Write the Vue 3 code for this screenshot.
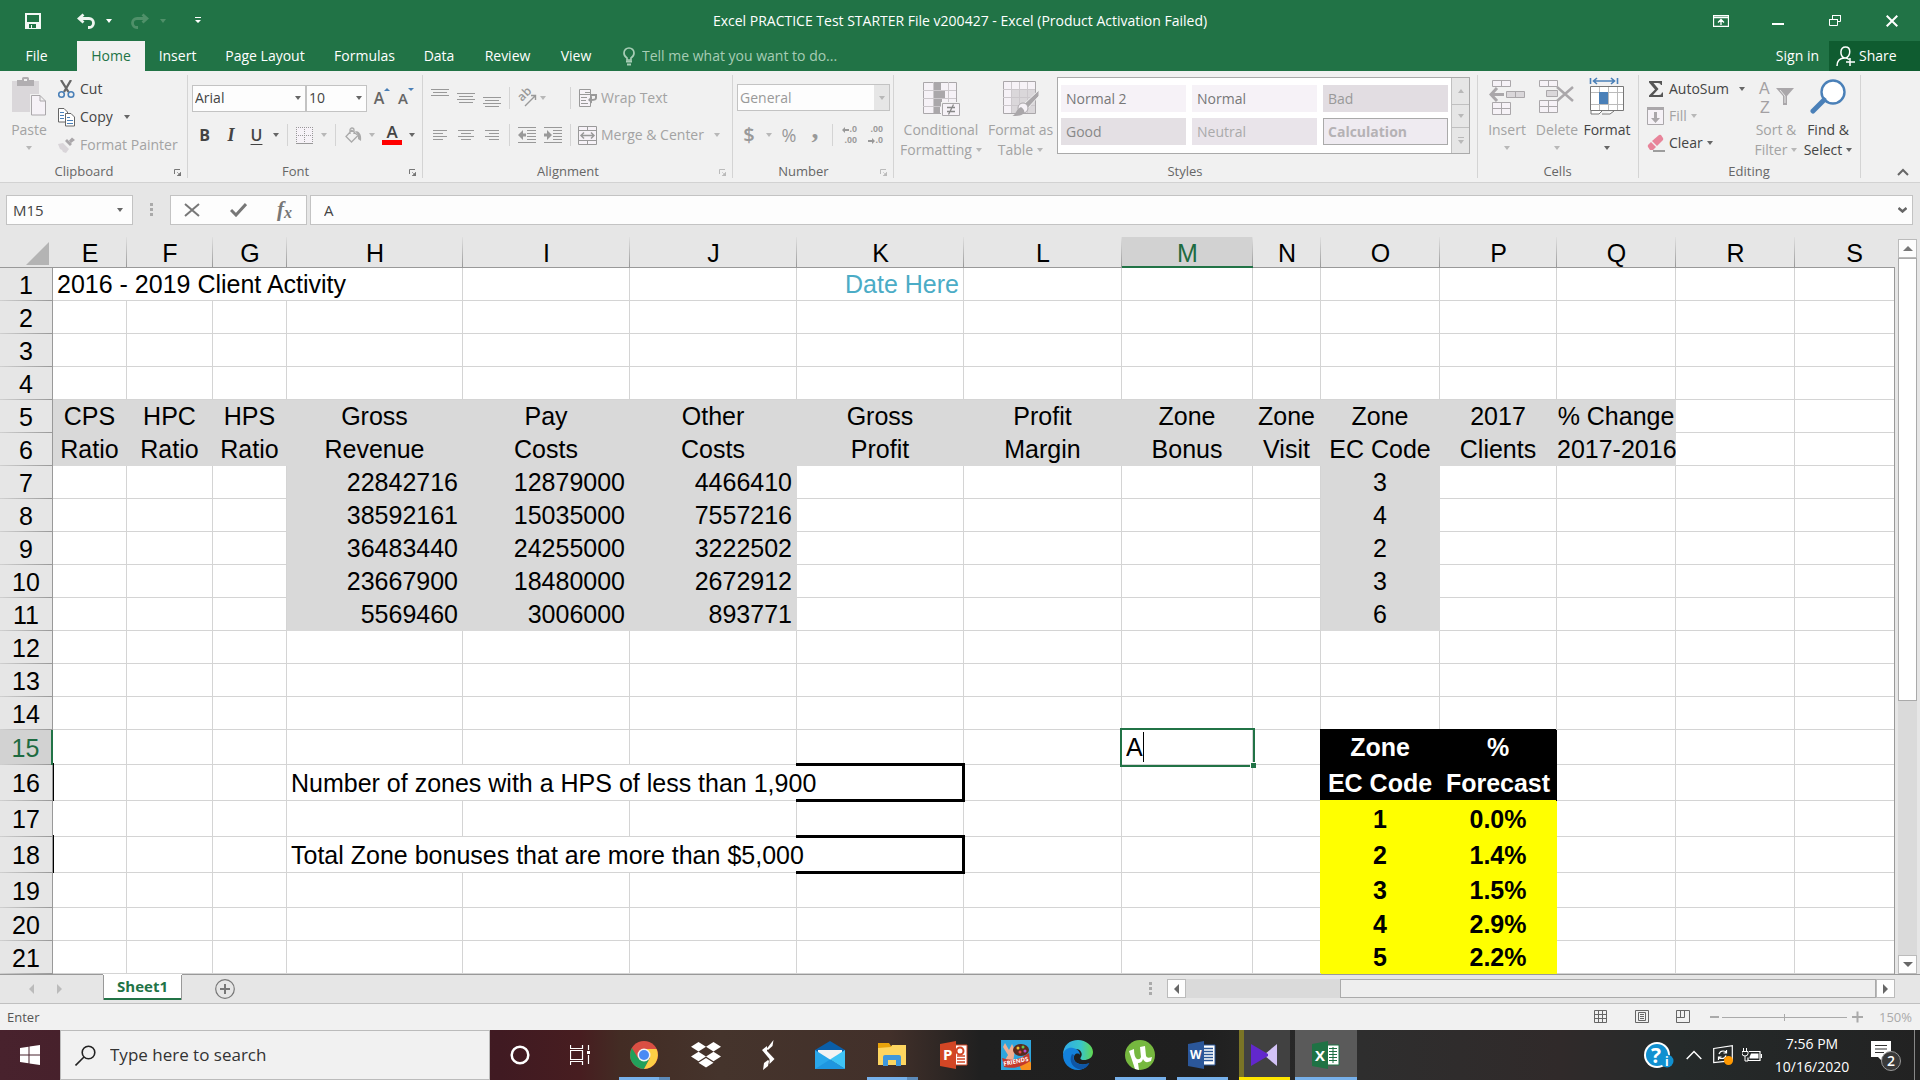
<template>
  <div class="window">
    <!-- title bar -->
    <header class="title-bar">
      <div class="quick-access">
        <button class="qa save" aria-label="Save">
          <svg width="16" height="16" viewBox="0 0 16 16"><path d="M0 0h16v16H0z M2 2v7h12V2z M4 11v4h2v-3h1v3h4v-4z" fill="#f4f8f5" fill-rule="evenodd" /></svg>
        </button>
        <button class="qa undo" aria-label="Undo">
          <svg width="18" height="16" viewBox="0 0 18 16"><path d="M6.500 1.500L2 5.500L6.500 9.500M2.500 5.500H12a4.500 4.500 0 0 1 0 9h-1" fill="none" stroke="#eef5f0" stroke-width="2.800" /></svg>
        </button>
        <button class="qa" aria-label="Undo history"><i class="caret light" /></button>
        <button class="qa redo" aria-label="Redo" disabled>
          <svg width="18" height="16" viewBox="0 0 18 16"><path d="M11.500 1.500L16 5.500L11.500 9.500M15.500 5.500H6a4.500 4.500 0 0 0 0 9h1" fill="none" stroke="#4f9069" stroke-width="2.800" /></svg>
        </button>
        <button class="qa" aria-label="Redo history" disabled><i class="caret dim" /></button>
        <button class="qa customize" aria-label="Customize Quick Access Toolbar">
          <svg width="6" height="7" viewBox="0 0 6 7"><path d="M0 0h6v1H0zM0 3h6L3 6z" fill="#fff" /></svg>
        </button>
      </div>
      <h1>Excel PRACTICE Test STARTER File v200427 - Excel (Product Activation Failed)</h1>
      <div class="window-buttons">
        <button aria-label="Ribbon Display Options">
          <svg width="16" height="12" viewBox="0 0 16 12"><path d="M.5.5h15v11H.5zM1 2.500h14M8 10V5M5 7.500L8 4.500L11 7.500" fill="none" stroke="#fff" stroke-width="1.300" /></svg>
        </button>
        <button aria-label="Minimize"><svg width="12" height="12" viewBox="0 0 12 12"><path d="M0 8h12v2H0z" fill="#fff" /></svg></button>
        <button aria-label="Restore Down">
          <svg width="12" height="14" viewBox="0 0 12 14"><path d="M.5 5.500h8v6h-8zM3.500 5V1.500h8v6H9" fill="none" stroke="#fff" /><path d="M0 5h9v1H0zM3 1h9v1H3z" fill="#fff" /></svg>
        </button>
        <button aria-label="Close"><svg width="12" height="12" viewBox="0 0 12 12"><path d="M.7.7l10.600 10.600M11.300.7L.7 11.300" stroke="#fff" stroke-width="2" /></svg></button>
      </div>
    </header>

    <!-- ribbon tabs -->
    <nav class="tabs">
      <div class="tab-list">
        <button v-for="t in tabs" :key="t" class="tab" :class="{ active: t === activeTab, file: t === 'File' }" @click="activeTab = t">{{ t }}</button>
      </div>
      <label class="tell-me">
        <svg width="12" height="19" viewBox="0 0 12 19"><path d="M4 13v-2C1.500 9.500 1 8 1 6a5 5 0 0 1 10 0c0 2-.5 3.500-3 5v2z" fill="none" stroke="#a7cdb5" stroke-width="1.700" /><path d="M3 14.500h6M4 17.500h4" stroke="#a7cdb5" stroke-width="2" /></svg>
        <input type="text" placeholder="Tell me what you want to do...">
      </label>
      <button class="sign-in">Sign in</button>
      <button class="share">
        <svg width="19" height="21" viewBox="0 0 19 21"><path d="M1 20c0-5 3-8 8-8M9 12.500c-6-2.500-5-11.500.5-11.500S15.500 9.500 9 12.500M9 12c2 0 3 .5 4 1.500M14 12v8M10 16h9" fill="none" stroke="#fff" stroke-width="1.500" /></svg>
        Share
      </button>
    </nav>

    <!-- ribbon -->
    <section class="ribbon">
      <div class="group clipboard">
        <div class="body">
          <button class="big off">
            <svg width="34" height="39" viewBox="0 0 34 39"><path d="M0 4h27v31H0z" fill="#dad7da" /><path d="M5 3h5V1.500A1.500 1.500 0 0 1 11.500 0h4A1.500 1.500 0 0 1 17 1.500V3h5v6H5z" fill="#b1aeb1" /><path d="M12 2h3v2h-3z" fill="#f1f1f1" /><path d="M18 17h10l7 7v16H18z" fill="#f1f1f1" /><path d="M19.500 18.500h8.500l5.500 5.500v14h-14zM28 18.500V24h5.500" fill="#f6f2f7" stroke="#aaa7aa" /></svg>
            <span>Paste</span><i class="caret off" />
          </button>
          <div class="stack">
            <button>
              <svg width="17" height="19" viewBox="0 0 17 19"><path d="M3 0l7.500 12M13 0L6 12" stroke="#666" stroke-width="2.300" /><g fill="none" stroke="#4a80b8" stroke-width="1.600"><circle cx="3.500" cy="14.500" r="2.800" /><circle cx="13" cy="14.500" r="2.800" /></g></svg>
              Cut
            </button>
            <button>
              <svg width="17" height="19" viewBox="0 0 17 19"><path d="M.5.5H6L9.500 4v10h-9z" fill="#fff" stroke="#666" /><path d="M2 4.500h4M2 7.500h4M2 10.500h4" stroke="#4a80b8" /><path d="M7.500 5.500H13L16.500 9v9h-9z" fill="#fff" stroke="#666" /><path d="M9 9.500h3M9 12.500h6M9 15.500h6" stroke="#4a80b8" /></svg>
              Copy<i class="caret far" />
            </button>
            <button class="off">
              <svg width="17" height="16" viewBox="0 0 17 16"><path d="M0 7l5-1 6 6-3 4-3-1-1-2-2-1z" fill="#d9d5d9" /><path d="M7 4l5 5 2-2-5-5zM11 3.500L14 .5l3 2.500-4 3z" fill="#aaa7aa" /></svg>
              Format Painter
            </button>
          </div>
        </div>
        <footer>Clipboard<button class="launcher" aria-label="Clipboard settings"><svg width="7" height="7" viewBox="0 0 7 7"><path d="M.5 5V.5H6" fill="none" stroke="currentColor" /><path d="M3 3l3 3M7 3v4H3z" stroke="currentColor" fill="currentColor" stroke-width=".6" /></svg></button></footer>
      </div>

      <div class="group font">
        <div class="body rows">
          <div class="font-pick">
            <div class="combo"><input aria-label="Font" value="Arial"><button aria-label="Font list"><i class="caret" /></button></div>
            <div class="combo"><input aria-label="Font size" value="10"><button aria-label="Size list"><i class="caret" /></button></div>
            <button class="grow" aria-label="Increase font size">A<svg width="6" height="3" viewBox="0 0 6 3"><path d="M0 3h6L3 0z" fill="#4a80b8" /></svg></button>
            <button class="grow small" aria-label="Decrease font size">A<svg width="6" height="3" viewBox="0 0 6 3"><path d="M0 0h6L3 3z" fill="#4a80b8" /></svg></button>
          </div>
          <div class="font-tools">
            <button class="bold">B</button><button class="italic">I</button><button class="under">U</button><button aria-label="Underline styles"><i class="caret" /></button>
            <i class="rule" />
            <button aria-label="Borders"><svg width="17" height="17" viewBox="0 0 17 17"><path d="M0 0h17v16H0z" fill="#f6f2f7" /><path d="M.5 0v16M8.500 0v16M16.500 0v16M0 .5h17M0 8.500h17" stroke="#999" stroke-dasharray="1 1" /><path d="M0 16.500h17" stroke="#999" /></svg></button>
            <button aria-label="Border styles"><i class="caret off" /></button>
            <i class="rule" />
            <button aria-label="Fill color"><svg width="17" height="17" viewBox="0 0 17 17"><path d="M7 3L1 9.500l5.500 5.500 6.500-6.500L6.500 3M5 7V3a2 2 0 0 1 4 0v4" fill="none" stroke="#aaa" stroke-width="1.300" /><path d="M10 4c4 0 7 3 6 10l-3-2V8z" fill="#aaa" /></svg></button>
            <button aria-label="Fill colors"><i class="caret off" /></button>
            <button class="font-color">A</button>
            <button aria-label="Font colors"><i class="caret" /></button>
          </div>
        </div>
        <footer>Font<button class="launcher" aria-label="Font settings"><svg width="7" height="7" viewBox="0 0 7 7"><path d="M.5 5V.5H6" fill="none" stroke="currentColor" /><path d="M3 3l3 3M7 3v4H3z" stroke="currentColor" fill="currentColor" stroke-width=".6" /></svg></button></footer>
      </div>

      <div class="group alignment">
        <div class="body rows">
          <div class="align-tools">
            <button v-for="a in vAligns" :key="a.name" :aria-label="a.name"><svg width="18" height="18" viewBox="0 0 18 18"><path :d="a.d" stroke="#999" /></svg></button>
            <i class="rule" />
            <button aria-label="Orientation"><svg class="loose" width="20" height="18" viewBox="0 0 20 18"><text transform="translate(5 13) rotate(-45)" font-size="12" font-family="Open Sans" font-weight="600" fill="#999">ab</text><path d="M8 17L18 7M14 6.500h4.500V11" fill="none" stroke="#999" stroke-width="1.400" /></svg></button>
            <button class="left" aria-label="Orientation menu"><i class="caret off" /></button>
            <i class="rule" />
            <button class="wide">
              <svg width="19" height="19" viewBox="0 0 19 19"><path d="M1.500.5h11v17h-11zM1 5.500h11M3 8.500h6M3 11.500h5M3 14.500h7M7 3.500h5" fill="#f6f2f7" stroke="#999" /><path d="M12 6h6v3q0 2-5 2" fill="none" stroke="#999" stroke-width="2" /><path d="M14 6.500v8L10 11z" fill="#999" /></svg>
              Wrap Text
            </button>
          </div>
          <div class="align-tools">
            <button v-for="a in hAligns" :key="a.name" :aria-label="a.name"><svg width="16" height="11" viewBox="0 0 16 11"><path :d="a.d" stroke="#999" /></svg></button>
            <i class="rule" />
            <button aria-label="Decrease indent"><svg width="18" height="17" viewBox="0 0 18 17"><path d="M0 .5h18M9 3.500h9M9 6.500h9M9 9.500h9M9 12.500h9M0 15.500h18" stroke="#999" /><path d="M0 8l5-5v3.500h3v3H5V13z" fill="#999" /></svg></button>
            <button aria-label="Increase indent"><svg width="18" height="17" viewBox="0 0 18 17"><path d="M0 .5h18M9 3.500h9M9 6.500h9M9 9.500h9M9 12.500h9M0 15.500h18" stroke="#999" /><path d="M8 8L3 3v3.500H0v3h3V13z" fill="#999" /></svg></button>
            <i class="rule" />
            <button class="wide">
              <svg width="19" height="19" viewBox="0 0 19 19"><path d="M.5.5h18v18H.5zM.5 4.500h18M.5 14.500h18M9.500.5v4M9.500 14.500v4" fill="#f6f2f7" stroke="#999" /><path d="M3 9.500h13M6 6.500l-3 3 3 3M13 6.500l3 3-3 3" fill="none" stroke="#999" stroke-width="1.500" /></svg>
              Merge &amp; Center<i class="caret off far" />
            </button>
          </div>
        </div>
        <footer>Alignment<button class="launcher off" aria-label="Alignment settings"><svg width="7" height="7" viewBox="0 0 7 7"><path d="M.5 5V.5H6" fill="none" stroke="currentColor" /><path d="M3 3l3 3M7 3v4H3z" stroke="currentColor" fill="currentColor" stroke-width=".6" /></svg></button></footer>
      </div>

      <div class="group number">
        <div class="body rows">
          <div class="combo gray"><input aria-label="Number format" value="General"><button aria-label="Number formats"><i class="caret off" /></button></div>
          <div class="number-tools">
            <button class="dollar">$</button><button aria-label="Currencies"><i class="caret off" /></button><button class="percent">%</button><button class="comma">,</button>
            <i class="rule" />
            <button class="decimals">
              <span><svg width="7" height="6" viewBox="0 0 7 6"><path d="M0 3l3-3v2h4v2H3v2z" fill="#999" /></svg>.0</span><span>.00</span>
            </button>
            <button class="decimals">
              <span>.00</span><span><svg width="7" height="6" viewBox="0 0 7 6"><path d="M7 3L4 0v2H0v2h4v2z" fill="#999" /></svg>.0</span>
            </button>
          </div>
        </div>
        <footer>Number<button class="launcher off" aria-label="Number settings"><svg width="7" height="7" viewBox="0 0 7 7"><path d="M.5 5V.5H6" fill="none" stroke="currentColor" /><path d="M3 3l3 3M7 3v4H3z" stroke="currentColor" fill="currentColor" stroke-width=".6" /></svg></button></footer>
      </div>

      <div class="group styles">
        <div class="body">
          <button class="big off cond">
            <svg width="38" height="39" viewBox="0 0 38 39"><path d="M1.500 5.500h33v31h-33z" fill="#f6f2f7" stroke="#aaa7aa" /><path d="M11.500 5v31M26.500 5v31M1 13.500h33M1 21.500h33M1 29.500h33" stroke="#ccc8cc" /><path d="M12 6h7v7h-7zM12 14h11v7H12zM12 22h8v7h-8zM12 30h6v6h-6z" fill="#aaa7aa" /><path d="M19 25h20v16H19z" fill="#f1f1f1" /><path d="M20.500 26.500h17v12h-17z" fill="#f6f2f7" stroke="#aaa7aa" /><path d="M25 30.500h8M25 34.500h8M31.500 27.500l-5 10" stroke="#888" stroke-width="1.300" /></svg>
            <span>Conditional</span><span>Formatting <i class="caret off" /></span>
          </button>
          <button class="big off table-style">
            <svg width="38" height="39" viewBox="0 0 38 39"><path d="M1.500 4.500h32v32h-32z" fill="#f6f2f7" stroke="#aaa7aa" /><path d="M10 13h23v23H10z" fill="#dad7da" /><path d="M9.500 5v31M17.500 5v31M25.500 5v31M1 12.500h32M1 20.500h32M1 28.500h32" stroke="#ccc8cc" /><path d="M37 13v6L25 32l-4-4z" fill="#aaa7aa" stroke="#f1f1f1" /><circle cx="21" cy="31" r="5" fill="#f6f2f7" stroke="#aaa7aa" /><path d="M10 39c4-1 4-7 9-9 4 3 4 5 2 7-3 2-6 2-11 2z" fill="#aaa7aa" /></svg>
            <span>Format as</span><span>Table <i class="caret off" /></span>
          </button>
          <div class="gallery">
            <div class="swatches">
              <button v-for="s in cellStyles" :key="s" class="swatch" :class="s.toLowerCase().replace(' ', '-')">{{ s }}</button>
            </div>
            <div class="gallery-scroll">
              <button aria-label="Row up"><i class="caret up off" /></button>
              <button aria-label="Row down"><i class="caret off" /></button>
              <button aria-label="More styles"><svg width="6" height="7" viewBox="0 0 6 7"><path d="M0 0h6v1H0zM0 3h6L3 7z" fill="#b8b8b8" /></svg></button>
            </div>
          </div>
        </div>
        <footer>Styles</footer>
      </div>

      <div class="group cells">
        <div class="body">
          <button class="big off">
            <svg width="36" height="39" viewBox="0 0 36 39"><g fill="#f6f2f7" stroke="#aaa7aa"><path d="M3.500 3.500h18v6h-18zM12.500 3.500v6" /><path d="M3.500 25.500h18v12h-18zM12.500 25.500v12M3.500 31.500h18" /><path d="M17.500 14.500h18v6h-18zM26.500 14.500v6" fill="#dad7da" /></g><path d="M15 17.500H2M8 11l-6 6.500L8 24" fill="none" stroke="#aaa7aa" stroke-width="3" /></svg>
            <span>Insert</span><i class="caret off" />
          </button>
          <button class="big off">
            <svg width="36" height="39" viewBox="0 0 36 39"><g fill="#f6f2f7" stroke="#aaa7aa"><path d="M.5 3.500h18v6H.5zM9.500 3.500v6" /><path d="M.5 23.500h18v12H.5zM9.500 23.500v12M.5 29.500h18" /><path d="M7.500 13.500h11v6h-11z" fill="#dad7da" /></g><path d="M18 10l16 14M34 10L18 24" stroke="#aaa7aa" stroke-width="2.500" /></svg>
            <span>Delete</span><i class="caret off" />
          </button>
          <button class="big">
            <svg width="36" height="39" viewBox="0 0 36 39"><path d="M1.500 1v6M28.500 1v6M4 4h22M8 1L4.500 4 8 7M22 1l3.500 3L22 7" fill="none" stroke="#4a80b8" stroke-width="1.600" /><path d="M1.500 9.500h33v24h-33z" fill="#fff" stroke="#777" /><path d="M10.500 10v23M19.500 10v23M28.500 10v23M2 15.500h32M2 27.500h32" stroke="#bbb" /><path d="M10 15h9v12h-9z" fill="#4a80b8" /><path d="M2 34v3h8l3-3M13 37h8l4-3" fill="#fff" stroke="#777" /></svg>
            <span>Format</span><i class="caret" />
          </button>
        </div>
        <footer>Cells</footer>
      </div>

      <div class="group editing">
        <div class="body">
          <div class="stack">
            <button>
              <svg width="18" height="18" viewBox="0 0 18 18"><path d="M2 1h13v4h-1q-.5-2-3-2H6.500l5 6-5.500 6h6q2.500 0 3-2.500h1V17H2v-1.500L8 9.500 2 2.500z" fill="#555" /></svg>
              AutoSum<i class="caret far" />
            </button>
            <button class="off">
              <svg width="18" height="18" viewBox="0 0 18 18"><path d="M.5.500h16v17H.5z" fill="#f6f2f7" stroke="#aaa7aa" /><path d="M0 0h17v3H0z" fill="#aaa7aa" /><path d="M7 5h3v6h3l-4.500 5L4 11h3z" fill="#aaa7aa" /></svg>
              Fill<i class="caret off" />
            </button>
            <button>
              <svg width="18" height="18" viewBox="0 0 18 18"><path d="M5 7L12 1q1-.5 2 0l2 3q.5 1 0 2l-6 6z" fill="#e8849a" /><path d="M4 8l5 5-3 3H3L1 13q-.5-1 0-2z" fill="#e8849a" /><path d="M6 17h12" stroke="#666" stroke-width="1.200" /></svg>
              Clear<i class="caret" />
            </button>
          </div>
          <button class="big off">
            <svg width="36" height="39" viewBox="0 0 36 39"><text x="1" y="17" font-size="16" font-family="Liberation Sans" fill="#a3a0a3">A</text><text x="2" y="36" font-size="16" font-family="Liberation Sans" fill="#a3a0a3">Z</text><path d="M18 11h18l-7 8v9h-4v-9z" fill="#aaa7aa" /><path d="M22 13l5 6v7" fill="none" stroke="#e8e8e8" /></svg>
            <span>Sort &amp;</span><span>Filter <i class="caret off" /></span>
          </button>
          <button class="big">
            <svg width="36" height="39" viewBox="0 0 36 39"><circle cx="23" cy="15" r="11.500" fill="#fff" stroke="#4a80b8" stroke-width="2.400" /><path d="M14 23L3 34" stroke="#4a80b8" stroke-width="5" stroke-linecap="round" /></svg>
            <span>Find &amp;</span><span>Select <i class="caret" /></span>
          </button>
        </div>
        <footer>Editing</footer>
      </div>

      <button class="collapse" aria-label="Collapse the Ribbon"><svg width="12" height="8" viewBox="0 0 12 8"><path d="M1 7l5-5 5 5" fill="none" stroke="#666" stroke-width="2" /></svg></button>
    </section>

    <!-- formula bar -->
    <section class="formula-bar">
      <div class="combo name-box"><input aria-label="Name Box" value="M15"><button aria-label="Names"><i class="caret" /></button></div>
      <i class="dots" />
      <div class="edit-buttons">
        <button aria-label="Cancel"><svg width="16" height="14" viewBox="0 0 16 14"><path d="M1 1l14 12M15 1L1 13" stroke="#777" stroke-width="2" /></svg></button>
        <button aria-label="Enter"><svg width="17" height="14" viewBox="0 0 17 14"><path d="M1 7l5 5L16 1" fill="none" stroke="#777" stroke-width="3" /></svg></button>
        <button class="fx">f<sub>x</sub></button>
      </div>
      <div class="combo formula">
        <input v-model="cellText" aria-label="Formula Bar">
        <button aria-label="Expand Formula Bar"><svg width="9" height="6" viewBox="0 0 9 6"><path d="M.5 1l4 3.500L8.500 1" fill="none" stroke="#666" stroke-width="2.500" /></svg></button>
      </div>
    </section>

    <!-- worksheet -->
    <main class="sheet-area">
      <div class="sheet">
        <table>
          <colgroup>
            <col class="w-head">
            <col v-for="c in columns" :key="c" :class="'w-' + c.toLowerCase()">
          </colgroup>
          <thead>
            <tr>
              <th class="corner"><svg width="23" height="23" viewBox="0 0 23 23"><path d="M23 0v23H0z" fill="#b4b4b4" /></svg></th>
              <th v-for="c in columns" :key="c" scope="col" :class="{ current: c === 'M' }">{{ c }}</th>
            </tr>
          </thead>
          <tbody>
            <tr v-for="row in rows" :key="row.n" :class="row.size">
              <th scope="row" :class="{ current: row.n === 15 }">{{ row.n }}</th>
              <td v-for="cell in row.cells" :key="cell.col" :colspan="cell.span" :class="cell.cls">
                <div v-if="cell.edit" class="editor"><input v-model="cellText" aria-label="Cell M15"><i class="cursor" /></div>
                <template v-else>{{ cell.text }}</template>
              </td>
            </tr>
          </tbody>
        </table>
      </div>
      <div class="v-scroll">
        <button aria-label="Scroll up"><i class="caret up" /></button>
        <div class="v-track"><div class="v-thumb" /></div>
        <button aria-label="Scroll down"><i class="caret" /></button>
      </div>
    </main>

    <!-- sheet tabs -->
    <section class="sheet-bar">
      <button class="sheet-nav" aria-label="Previous sheet"><i class="caret side-left off" /></button>
      <button class="sheet-nav" aria-label="Next sheet"><i class="caret side-right off" /></button>
      <button class="sheet-tab">Sheet1</button>
      <button class="new-sheet" aria-label="New sheet"><svg width="20" height="20" viewBox="0 0 20 20"><circle cx="10" cy="10" r="9.300" fill="none" stroke="#777" stroke-width="1.200" /><path d="M10 5v10M5 10h10" stroke="#777" stroke-width="2" /></svg></button>
      <i class="dots" />
      <div class="h-scroll">
        <button aria-label="Scroll left"><i class="caret side-left" /></button>
        <div class="h-track"><div class="h-thumb" /></div>
        <button aria-label="Scroll right"><i class="caret side-right" /></button>
      </div>
    </section>

    <footer class="status-bar">
      <span class="mode">Enter</span>
      <button aria-label="Normal view"><svg width="14" height="14" viewBox="0 0 14 14"><path d="M.5.5h12v12H.5zM4.500.5v12M8.500.5v12M.5 4.500h12M.5 8.500h12" fill="none" stroke="#666" /></svg></button>
      <button aria-label="Page layout"><svg width="14" height="14" viewBox="0 0 14 14"><path d="M.5.5h13v12H.5zM3.500 2.500h7v8h-7zM5 4.500h4M5 6.500h4M5 8.500h4" fill="none" stroke="#666" /></svg></button>
      <button aria-label="Page break preview"><svg width="14" height="14" viewBox="0 0 14 14"><path d="M.5.5h13v12H.5zM4.500.5v7M8.500.5v7M.5 7.500h8" fill="none" stroke="#666" /></svg></button>
      <button class="zoom-btn" aria-label="Zoom out"><svg width="11" height="12" viewBox="0 0 11 12"><path d="M1 6h9" stroke="#aaa" stroke-width="2" /></svg></button>
      <i class="zoom-line" />
      <button class="zoom-btn" aria-label="Zoom in"><svg width="11" height="12" viewBox="0 0 11 12"><path d="M0 6h11M5.500.5v11" stroke="#aaa" stroke-width="2" /></svg></button>
      <button class="zoom-level">150%</button>
    </footer>

    <!-- taskbar -->
    <footer class="taskbar">
      <button class="start" aria-label="Start"><svg width="20" height="20" viewBox="0 0 20 20"><path d="M0 3l8.500-1.200V9.500H0zM9.500 1.600L20 0v9.500H9.500zM0 10.500h8.500v7.700L0 17zM9.500 10.500H20V20L9.500 18.400z" fill="#fff" /></svg></button>
      <label class="search">
        <svg width="21" height="21" viewBox="0 0 21 21"><circle cx="13.500" cy="7.500" r="6.300" fill="none" stroke="#222" stroke-width="1.600" /><path d="M9 12l-8.500 8.500" stroke="#222" stroke-width="1.600" /></svg>
        <input type="text" placeholder="Type here to search">
      </label>
      <button class="sys" aria-label="Cortana"><svg width="20" height="20" viewBox="0 0 20 20"><circle cx="10" cy="10" r="8.300" fill="none" stroke="#fff" stroke-width="2.500" /></svg></button>
      <button class="sys" aria-label="Task View"><svg width="20" height="20" viewBox="0 0 20 20"><path d="M.5 0v3.500h12V0M.5 20v-3.500h12V20M.5 5.500h12v9H.5zM18.500 0v5M18.500 10v9" fill="none" stroke="#fff" stroke-width="1.200" /><path d="M17 6h3v3h-3z" fill="#fff" /></svg></button>
      <div class="apps">
        <button class="app open stacked" aria-label="Chrome"><svg width="28" height="28" viewBox="0 0 28 28"><circle cx="14" cy="14" r="14" fill="#d94f43" /><path d="M1.900 7A14 14 0 0 0 14 28l6-11-6 3-6-3z" fill="#22a05b" /><path d="M26.500 8H14l6 6v3l-6 11A14 14 0 0 0 26.500 8z" fill="#fdce45" /><circle cx="14" cy="14" r="6.500" fill="#f3f3f3" /><circle cx="14" cy="14" r="5" fill="#4a8af4" /></svg></button>
        <button class="app" aria-label="Dropbox"><svg width="30" height="26" viewBox="0 0 30 26"><path d="M7.500 0L15 4.700 7.500 9.500 0 4.700zM22.500 0L30 4.700l-7.500 4.800L15 4.700zM7.500 9.800l7.500 4.700-7.500 4.800L0 14.500zM22.500 9.800l7.500 4.700-7.500 4.800-7.500-4.800zM15 16l7.500 4.700L15 25.500l-7.500-4.800z" fill="#fff" /></svg></button>
        <button class="app" aria-label="Scribble"><svg width="14" height="30" viewBox="0 0 14 30"><path d="M12.500 0L11.500 6 7 10 5.500 9zM1 10l5-4v5l7.500 8-5 5v-5z" fill="#fff" /><path d="M2 30l1-7 4-3 1 1-1 5z" fill="#fff" /></svg></button>
        <button class="app" aria-label="Mail"><svg width="30" height="28" viewBox="0 0 30 28"><path d="M0 9L15 0l15 9v3H0z" fill="#0a5ea8" /><path d="M3 9h24v10H3z" fill="#f3f3f3" /><path d="M0 9l30 19H0z" fill="#2aa7ea" /><path d="M30 9v19L15 18.500z" fill="#3fc4f6" /><path d="M0 28l15-9.500L30 28z" fill="#1e96e0" /></svg></button>
        <button class="app open stacked" aria-label="File Explorer"><svg width="28" height="24" viewBox="0 0 28 24"><path d="M0 0h11l2 3h14v6H0z" fill="#e8a30c" /><path d="M0 5l13-1 1-2h14v20H0z" fill="#fdd560" /><path d="M5 23V14q0-2 2-2h14q2 0 2 2v9h-5v-6h-8v6z" fill="#3f97dc" /></svg></button>
        <button class="app" aria-label="PowerPoint"><svg width="28" height="28" viewBox="0 0 28 28"><path d="M14 4h13v20H14z" fill="#fff" stroke="#d24625" /><path d="M17 15h8M17 18h8M17 21h8" stroke="#d24625" stroke-width="1.500" /><circle cx="20" cy="10" r="3.500" fill="none" stroke="#d24625" stroke-width="2" /><path d="M0 3l16-3v28L0 25z" fill="#d24625" /><text x="3" y="19" font-family="Open Sans" font-weight="700" font-size="15" fill="#fff">P</text></svg></button>
        <button class="app" aria-label="Candy Crush Friends"><svg width="30" height="30" viewBox="0 0 30 30"><path d="M0 0h30v30H0z" fill="#2fa6dc" /><path d="M4 3l4 7 3-6 3 6-2 12-8-2 3-5-5-8z" fill="#efaf92" /><ellipse cx="20" cy="10" rx="8" ry="6" fill="#592a1d" /><circle cx="17" cy="8" r="1.500" fill="#f2c62e" /><circle cx="22" cy="7" r="1.500" fill="#64c64c" /><circle cx="24" cy="11" r="1.500" fill="#b550d2" /><circle cx="19" cy="12" r="1.500" fill="#e64646" /><circle cx="25" cy="26" r="6" fill="#f78f1e" /><path d="M1 18q14 5 27-5l1 8q-12 9-26 6z" fill="#c5382a" /><text x="3" y="26" transform="rotate(-12 3 26)" font-family="Open Sans" font-weight="700" font-size="6" fill="#fff">FRIENDS</text></svg></button>
        <button class="app" aria-label="Edge"><svg width="30" height="30" viewBox="0 0 30 30"><defs><linearGradient id="edgeTop"><stop offset="0" stop-color="#2fa9e8" /><stop offset=".6" stop-color="#39c6c9" /><stop offset="1" stop-color="#62d84e" /></linearGradient></defs><path d="M0 15C0 5 7 0 15 0s15 6 15 12-5 8-9 8-4-2-3-3c2-3 0-8-5-8S2 10 0 15z" fill="url(#edgeTop)" /><path d="M0 15C1 9 6 7 10 8c5 1 7 4 7 7-2-3-7-1-6 4s9 7 15 4c-3 5-7 7-11 7C6 30 0 23 0 15z" fill="#1381dc" /><path d="M9 14c-4 7 1 15 9 15.500 4-1 7-3 8.500-6.500C17 27 8 22 11 15z" fill="#0f56a5" /></svg></button>
        <button class="app open" aria-label="uTorrent"><svg width="30" height="30" viewBox="0 0 30 30"><circle cx="15" cy="15" r="15" fill="#76b83f" /><path d="M4 11l5-2q0 8 3 10 3 1 4-2l-1-10 5-1 1 10q1 3 6 1l-1 4q-6 3-8-2-1 4-5 4l1 7-4-1z" fill="#fff" /></svg></button>
        <button class="app open" aria-label="Word"><svg width="28" height="28" viewBox="0 0 28 28"><path d="M14 4h13v20H14z" fill="#fff" stroke="#2b5797" /><path d="M16 7.500h9M16 10.500h9M16 13.500h9M16 16.500h9M16 19.500h9" stroke="#2b5797" stroke-width="1.300" /><path d="M0 3l16-3v28L0 25z" fill="#2b579a" /><text x="2" y="18" font-family="Open Sans" font-weight="700" font-size="12" fill="#fff">W</text></svg></button>
        <button class="app open alert" aria-label="KineMaster"><svg width="26" height="22" viewBox="0 0 26 22"><path d="M26 0v22L14 12v-2z" fill="#d3c3f7" /><path d="M0 0l17 10v2L0 22z" fill="#6228cc" /></svg></button>
        <button class="app open focused" aria-label="Excel"><svg width="28" height="28" viewBox="0 0 28 28"><path d="M14 4h13v20H14z" fill="#fff" stroke="#1f7244" /><path d="M17 7.500h8M17 10.500h8M17 13.500h8M17 16.500h8M17 19.500h8M21 6v16" stroke="#1f7244" /><path d="M0 3l16-3v28L0 25z" fill="#1f7244" /><text x="3" y="20" font-family="Open Sans" font-weight="700" font-size="15" fill="#fff">X</text></svg></button>
      </div>
      <div class="tray">
        <button class="help" aria-label="Help"><svg width="30" height="27" viewBox="0 0 30 27"><circle cx="13" cy="13" r="13" fill="#fff" /><circle cx="13" cy="13" r="11" fill="#1190d0" /><text x="7" y="21" font-family="Open Sans" font-weight="700" font-size="21" fill="#fff">?</text><circle cx="23" cy="19" r="6.500" fill="#1190d0" /><text x="21" y="24" font-family="Open Sans" font-weight="700" font-size="12" fill="#fff">i</text></svg></button>
        <button aria-label="Show hidden icons"><svg width="16" height="10" viewBox="0 0 16 10"><path d="M.7 9L8 1.500 15.300 9" fill="none" stroke="#fff" stroke-width="1.500" /></svg></button>
        <button aria-label="Updates"><svg width="20" height="20" viewBox="0 0 20 20"><path d="M.7 3.500L19.300.7v15L.7 17.500z" fill="none" stroke="#fff" stroke-width="1.200" /><path d="M6 9q1-3 4-3t3 1.500M13.500 5v3h-3M13 10.500q-1 3-4 3t-3-1.500M5.500 15v-3h3" fill="none" stroke="#fff" stroke-width="1.200" /><circle cx="15.500" cy="15.500" r="4.500" fill="#ff9800" /></svg></button>
        <button aria-label="Battery"><svg width="20" height="14" viewBox="0 0 20 14"><path d="M7 3.500h11v9H6v-3M19.500 6v4" fill="none" stroke="#fff" stroke-width="1.200" /><path d="M9 5.500h7.500v5H7.500V9z" fill="#fff" /><path d="M1.500 0v3M4.500 0v3M0 3.500h6v2Q6 8 3 8T0 5.500zM3 8v5h3" stroke="#fff" fill="none" /></svg></button>
        <button class="clock"><span>7:56 PM</span><span>10/16/2020</span></button>
        <button class="notes" aria-label="Notifications"><svg width="30" height="31" viewBox="0 0 30 31"><path d="M0 1h20v16h-9v4l-4-4H0z" fill="#fff" /><path d="M4 5.500h12M4 9h12M4 12.500h9" stroke="#333" stroke-width="1.200" /><circle cx="20" cy="21" r="9.500" fill="#3a3a3a" stroke="#999" /><text x="16" y="26" font-family="Open Sans" font-weight="600" font-size="14" fill="#fff">2</text></svg></button>
      </div>
    </footer>
  </div>
</template>

<script setup>
import { ref } from 'vue'

const tabs = ['File', 'Home', 'Insert', 'Page Layout', 'Formulas', 'Data', 'Review', 'View']
const activeTab = ref('Home')
const cellText = ref('A')

const vAligns = [
  { name: 'Top Align', d: 'M0 .5h18M2 3.500h14M0 6.500h18' },
  { name: 'Middle Align', d: 'M0 4.500h18M2 7.500h14M0 10.500h18M2 13.500h14' },
  { name: 'Bottom Align', d: 'M0 8.500h18M2 11.500h14M0 14.500h18M2 17.500h14' },
]
const hAligns = [
  { name: 'Align Left', d: 'M1 .5h14M1 3.500h10M1 6.500h14M1 9.500h10' },
  { name: 'Center', d: 'M0 .5h16M3 3.500h10M0 6.500h16M3 9.500h10' },
  { name: 'Align Right', d: 'M1 .5h14M5 3.500h10M1 6.500h14M5 9.500h10' },
]
const cellStyles = ['Normal 2', 'Normal', 'Bad', 'Good', 'Neutral', 'Calculation']

const columns = 'EFGHIJKLMNOPQRS'.split('')

// row number -> column -> cell
const data = {
  1: { E: { text: '2016 - 2019 Client Activity', span: 4 }, K: { text: 'Date Here', cls: 'num date' } },
  5: headings(['CPS', 'HPC', 'HPS', 'Gross', 'Pay', 'Other', 'Gross', 'Profit', 'Zone', 'Zone', 'Zone', '2017', '% Change']),
  6: headings(['Ratio', 'Ratio', 'Ratio', 'Revenue', 'Costs', 'Costs', 'Profit', 'Margin', 'Bonus', 'Visit', 'EC Code', 'Clients', '2017-2016']),
  7: figures(22842716, 12879000, 4466410, 3),
  8: figures(38592161, 15035000, 7557216, 4),
  9: figures(36483440, 24255000, 3222502, 2),
  10: figures(23667900, 18480000, 2672912, 3),
  11: figures(5569460, 3006000, 893771, 6),
  15: { M: { edit: true, cls: 'selected' }, ...forecast('Zone', '%', 'black') },
  16: { ...question('Number of zones with a HPS of less than 1,900'), ...forecast('EC Code', 'Forecast', 'black') },
  17: forecast('1', '0.0%', 'yellow'),
  18: { ...question('Total Zone bonuses that are more than $5,000'), ...forecast('2', '1.4%', 'yellow') },
  19: forecast('3', '1.5%', 'yellow'),
  20: forecast('4', '2.9%', 'yellow'),
  21: forecast('5', '2.2%', 'yellow'),
}

function headings(list) {
  return Object.fromEntries(list.map((text, i) => [columns[i], { text, cls: 'mid gray' }]))
}
function figures(h, i, j, o) {
  return {
    H: { text: h, cls: 'num gray' },
    I: { text: i, cls: 'num gray' },
    J: { text: j, cls: 'num gray' },
    O: { text: o, cls: 'mid gray' },
  }
}
function forecast(o, p, color) {
  return { O: { text: o, cls: 'mid strong ' + color }, P: { text: p, cls: 'mid strong ' + color } }
}
function question(text) {
  return { E: { cls: 'edge' }, H: { text, span: 3, cls: 'spill' }, K: { cls: 'boxed' } }
}

const rowSizes = { 15: 'h35', 16: 'h36', 17: 'h36', 18: 'h36', 19: 'h35' }

const rows = Array.from({ length: 21 }, (_, k) => {
  const n = k + 1
  const filled = data[n] || {}
  const cells = []
  for (let i = 0; i < columns.length;) {
    const cell = { col: columns[i], span: 1, ...filled[columns[i]] }
    cells.push(cell)
    i += cell.span
  }
  return { n, cells, size: rowSizes[n] }
})
</script>

<style>
body { background: #e6e6e6; }
</style>

<style scoped>
.window { min-height: 100vh; display: flex; flex-direction: column; font: 14px/20px "Open Sans", "Noto Sans", sans-serif; color: #444; background: #e6e6e6; overflow: hidden; }
.window *, .window *::before, .window *::after { box-sizing: border-box; }
button, input { font: inherit; color: inherit; background: none; border: 0; padding: 0; margin: 0; border-radius: 0; outline: none; min-width: 0; }
button { display: flex; align-items: center; justify-content: center; white-space: nowrap; }
svg { display: block; flex: none; }
.loose { overflow: visible; }

.caret { flex: none; width: 0; height: 0; border: 3px solid transparent; border-top: 4px solid #666; border-bottom: 0; }
.caret.off { border-top-color: #b8b8b8; }
.caret.light { border-top-color: #fff; }
.caret.dim { border-top-color: #4f9069; }
.caret.up { border-top: 0; border-bottom: 4px solid #777; }
.caret.up.off { border-bottom-color: #b8b8b8; }
.caret.side-left { border: 5px solid transparent; border-right-color: #666; border-left: 0; }
.caret.side-right { border: 5px solid transparent; border-left-color: #666; border-right: 0; }
.caret.side-left.off { border-right-color: #bbb; }
.caret.side-right.off { border-left-color: #bbb; }

/* title bar */
.title-bar { height: 41px; display: grid; grid-template-columns: 1fr auto 1fr; align-items: center; background: #217346; color: #fff; }
.title-bar h1 { margin: 0; font-size: 14px; font-weight: 400; }
.quick-access { display: flex; align-items: center; padding-left: 25px; }
.qa { height: 28px; }
.undo, .redo { width: 18px; margin-right: 11px; }
.undo { margin-left: 36px; }
.redo { margin-left: 19px; }
.customize { margin-left: 29px; }
.window-buttons { display: flex; justify-content: flex-end; }
.window-buttons button { width: 57px; height: 40px; }

/* tabs */
.tabs { height: 30px; display: flex; background: #217346; color: #fff; }
.tab-list { display: grid; grid-template-columns: 77px 68px 65px 110px 89px 60px 77px 60px; }
.tab.file { padding-right: 4px; }
.tab.active { background: #f1f1f1; color: #217346; }
.tell-me { flex: 1; display: flex; align-items: center; gap: 7px; padding-left: 17px; }
.tell-me input { width: 240px; }
.tell-me input::placeholder { color: #a7cdb5; opacity: 1; }
.sign-in { padding: 0 10px; }
.share { width: 91px; background: #0f5c30; justify-content: flex-start; gap: 4px; padding-left: 7px; }

/* ribbon */
.ribbon { display: flex; height: 112px; background: #f1f1f1; border-bottom: 1px solid #d2d2d2; }
.group { flex: none; padding: 4px 0 0; background: linear-gradient(#d4d4d4, #d4d4d4) right 4px / 1px calc(100% - 8px) no-repeat; }
.group .body { height: 86px; display: flex; }
.group .body.rows { flex-direction: column; gap: 9px; padding: 9px 4px 0; }
.group footer { position: relative; display: flex; justify-content: center; font-size: 13px; line-height: 21px; color: #666; padding-right: 20px; }
.launcher { position: absolute; right: 7px; top: 8px; color: #777; }
.launcher.off { color: #bbb; }
.clipboard { width: 188px; }
.font { width: 235px; }
.alignment { width: 310px; }
.number { width: 161px; }
.styles { width: 584px; }
.cells { width: 161px; }
.editing { width: 222px; }
.styles footer, .cells footer, .editing footer { padding-right: 2px; }
.off { color: #a3a3a3; }

.big { width: 50px; flex-direction: column; justify-content: flex-start; padding-top: 2px; }
.big span { display: flex; align-items: center; gap: 4px; }
.big > svg { margin-bottom: 4px; }
.big > .caret { margin-top: 6px; }
.clipboard .big { width: 58px; }
.stack { display: flex; flex-direction: column; }
.stack button { height: 28px; justify-content: flex-start; gap: 5px; }
.caret.far { margin-left: 6px; }

.combo { display: flex; height: 27px; background: #fdfdfd; border: 1px solid #c3c3c3; }
.combo input { flex: 1; padding-left: 2px; }
.combo button { width: 15px; }
.combo.gray { color: #999; }
.combo.gray button { background: #e6e6e6; }
.rows > div { flex: none; min-height: 28px; }
.rows > .combo { min-height: 27px; margin-bottom: 1px; }
.font-pick { display: grid; grid-template-columns: 114px 61px 26px 22px; align-items: center; }
.grow { font-size: 16px; font-weight: 600; color: #666; align-items: flex-start; padding-left: 4px; }
.grow.small { font-size: 15px; }
.font-tools { display: grid; grid-template-columns: 25px 28px 23px 16px 7px 27px 12px 11px 25px 12px 28px 11px; }
.rule { justify-self: center; width: 1px; height: 22px; margin: 3px 0; background: #d4d4d4; }
.bold { font-size: 16px; font-weight: 700; }
.italic { font: italic 700 18px/20px "Liberation Serif", serif; }
.under { font-size: 16px; font-weight: 600; text-decoration: underline; text-underline-offset: 3px; }
.font-color { height: 22px; width: 20px; justify-self: center; font-size: 17px; font-weight: 600; border-bottom: 5px solid #f00; margin-top: 2px; }
.align-tools { display: grid; grid-template-columns: 26px 26px 26px 9px 26px 26px 9px 1fr; color: #a3a3a3; }
.left { justify-content: flex-start; }
.wide { justify-content: flex-start; gap: 4px; padding-left: 3px; }
.number-tools { display: grid; grid-template-columns: 24px 16px 24px 28px 7px 26px 26px; color: #999; }
.dollar { font-size: 20px; font-weight: 600; }
.percent { font-size: 18px; }
.comma { font: 700 28px/12px "Liberation Serif", serif; padding-bottom: 12px; }
.decimals { flex-direction: column; align-items: flex-end; padding-right: 5px; font: 700 9px/11px "Liberation Sans", Arial, sans-serif; }
.decimals span { display: flex; align-items: center; }

.styles .cond { width: 94px; }
.styles .table-style { width: 65px; }
.gallery { height: 77px; margin: 2px 0 0 4px; display: flex; background: #fff; border: 1px solid #aaa; }
.swatches { display: grid; grid-template-columns: 125px 125px 125px; grid-auto-rows: 27px; gap: 6px; padding: 7px 3px; }
.swatch { justify-content: flex-start; padding-left: 5px; background: #f6f2f7; color: #777; }
.swatch.bad { background: #e2dde2; color: #999; }
.swatch.good { background: #e4e0e4; color: #888; }
.swatch.neutral { background: #e9e4ea; color: #aaa; }
.swatch.calculation { background: #efebf1; color: #b5b2b5; font-weight: 700; border: 1px solid #aaa; padding-left: 4px; }
.gallery-scroll { width: 18px; display: grid; grid-template-rows: 26px 23px 1fr; background: #e6e6e6; border-left: 1px solid #c0c0c0; }
.gallery-scroll button + button { border-top: 1px solid #c0c0c0; }
.cells .body { padding-left: 4px; }
.editing .body { padding-left: 8px; }
.editing .stack { width: 103px; }
.editing .stack button { height: 27px; gap: 4px; }
.editing .stack .far { margin-left: 6px; }
.editing .big { width: 52px; }
.collapse { margin-left: auto; width: 34px; height: 20px; align-self: flex-end; }

/* formula bar */
.formula-bar { height: 54px; display: flex; align-items: flex-start; padding: 12px 7px 0 6px; font-size: 15px; }
.formula-bar .combo { height: 30px; }
.name-box { width: 127px; }
.name-box input { padding-left: 6px; }
.name-box button { width: 24px; }
.dots { width: 3px; height: 13px; background: repeating-linear-gradient(#aaa 0 3px, transparent 3px 5px); }
.formula-bar .dots { margin: 8px 18px 0 17px; }
.edit-buttons { width: 137px; height: 30px; display: grid; grid-template-columns: 42px 50px 43px; background: #fdfdfd; border: 1px solid #c3c3c3; margin: 0 3px 0 -1px; }
.fx { font: italic 700 21px/24px "Liberation Serif", serif; color: #777; padding-bottom: 3px; }
.fx sub { font-size: 16px; line-height: 16px; align-self: flex-end; }
.formula { flex: 1; }
.formula input { padding-left: 13px; }
.formula button { width: 19px; }

/* worksheet */
.sheet-area { display: flex; border-bottom: 1px solid #999; }
.sheet { flex: 1; min-width: 0; overflow: hidden; }
table { width: 100%; table-layout: fixed; border-collapse: separate; border-spacing: 0; font: 25px/30px "Liberation Sans", Arial, sans-serif; color: #000; }
.w-head { width: 53px; }
.w-e, .w-g { width: 74px; }
.w-f { width: 86px; }
.w-h { width: 176px; }
.w-i, .w-j, .w-k { width: 167px; }
.w-l { width: 158px; }
.w-m { width: 131px; }
.w-n { width: 68px; }
.w-o, .w-q, .w-r, .w-s { width: 119px; }
.w-p { width: 117px; }
th, td { padding: 0; white-space: nowrap; }
th { font-weight: 400; }
thead th { height: 31px; padding-top: 2px; line-height: 28px; border-bottom: 1px solid #999; background: linear-gradient(#e0e0e0, #999) right / 1px 100% no-repeat #e6e6e6; }
thead th.current { color: #1e6b41; border-bottom: 2px solid #217346; padding-top: 3px; line-height: 26px; background-color: #d2d2d2; }
thead .corner { background: #e6e6e6; }
.corner svg { margin: 0 0 0 26px; }
tbody tr { height: 33px; }
tbody tr.h35 { height: 35px; }
tbody tr.h36 { height: 36px; }
tbody th { border-right: 1px solid #999; background: linear-gradient(90deg, #d0d0d0, #999) bottom / 100% 1px no-repeat #e6e6e6; }
tbody th.current { color: #1e6b41; background-color: #d2d2d2; border-right: 2px solid #217346; }
td { position: relative; padding-left: 4px; background: #fff; border-right: 1px solid #d4d4d4; border-bottom: 1px solid #d4d4d4; }
td.mid { text-align: center; padding-left: 0; }
td.num { text-align: right; padding-right: 4px; }
td.date { color: #4bacc6; }
td.strong { font-weight: 700; }
td.gray { background: #d9d9d9; border-color: #d9d9d9; }
td.black { background: #000; border-color: #000; color: #fff; box-shadow: -1px -1px 0 #000; }
td.yellow { background: #ff0; border-color: #ff0; box-shadow: -1px -1px 0 #ff0; }
td.spill { border-right-color: #fff; z-index: 2; }
td.boxed::after { content: ""; position: absolute; inset: -2px -2px -2px -1px; border: 3px solid #000; border-left: 0; z-index: 3; }
td.edge::before { content: ""; position: absolute; inset: -2px auto -2px 0; width: 1px; background: #000; }
td.selected::before { content: ""; position: absolute; inset: -2px -3px -3px -2px; border: 2px solid #217346; z-index: 1; }
td.selected::after { content: ""; position: absolute; right: -4px; bottom: -4px; width: 6px; height: 6px; background: #217346; border: solid #fff; border-width: 1px 0 0 1px; z-index: 2; }
.editor { display: flex; height: 30px; }
.editor input { width: 17px; }
.cursor { width: 1px; background: #000; }

.v-scroll { width: 26px; padding: 2px 3px 0 4px; display: flex; flex-direction: column; background: linear-gradient(#999, #999) 0 30px / 1px 100% no-repeat; }
.v-scroll button { height: 19px; background: #fdfdfd; border: 1px solid #bbb; }
.v-scroll .caret, .h-scroll .caret { border-width: 5px; }
.v-scroll .caret { border-bottom-width: 0; }
.v-scroll .caret.up { border-top-width: 0; border-bottom-width: 5px; }
.h-scroll .side-left { border-left-width: 0; }
.h-scroll .side-right { border-right-width: 0; }
.v-track { flex: 1; background: #dadada; }
.v-thumb { height: 63.5%; background: #fff; border: 1px solid #aaa; }

/* sheet tabs */
.sheet-bar { height: 29px; display: flex; align-items: flex-start; padding-right: 25px; border-bottom: 1px solid #c0c0c0; }
.sheet-nav { width: 28px; height: 28px; }
.sheet-nav:first-child { margin-left: 17px; }
.sheet-tab { width: 79px; height: 25px; margin: 0 33px 0 30px; padding-bottom: 4px; background: #fff; border: solid #999; border-width: 0 1px; box-shadow: 0 -1px 0 #fff, inset 0 -2px 0 #217346; color: #217346; font-size: 15px; font-weight: 700; }
.new-sheet { margin-top: 4px; }
.sheet-bar .dots { margin: 7px 15px 0 auto; }
.h-scroll { width: 38.4%; height: 19px; margin-top: 4px; display: flex; }
.h-scroll button { width: 19px; background: #fdfdfd; border: 1px solid #bbb; }
.h-track { flex: 1; display: flex; justify-content: flex-end; background: #dadada; }
.h-thumb { width: 77.7%; background: #eee; border: 1px solid #aaa; }

/* status bar */
.status-bar { height: 26px; display: flex; align-items: center; background: #f1f1f1; padding: 0 8px 0 7px; font-size: 13px; color: #555; }
.mode { flex: 1; }
.status-bar button { width: 41px; }
.status-bar .zoom-btn { width: 13px; }
.status-bar button:nth-of-type(4) { margin-left: 4px; }
.zoom-line { width: 125px; height: 7px; margin: 0 4px 0 1px; background: linear-gradient(#aaa, #aaa) center / 100% 1px no-repeat, linear-gradient(#aaa, #aaa) center / 1px 100% no-repeat; }
.status-bar .zoom-level { width: auto; margin-left: 15px; color: #aaa; }

/* taskbar */
.taskbar { height: 50px; display: flex; background: linear-gradient(90deg, #48222d 0, #401a22 500px, #471d20 580px, #432c24 620px, #45342c 720px, #42302a 890px, #202020 980px, #1f1f1f 1200px, #2e2e2e 1360px, #302a2a 1560px, #252a2a 1680px, #222 100%); color: #fff; }
.start { width: 60px; }
.search { width: 430px; display: flex; align-items: center; gap: 14px; padding-left: 14px; background: #f1f1f1; border: 1px solid #bbb; }
.search input { flex: 1; font-size: 17px; }
.search input::placeholder { color: #333; opacity: 1; }
.sys { width: 60px; }
.apps { display: flex; padding-left: 3px; }
.app { position: relative; width: 62px; }
.app.open::after { content: ""; position: absolute; left: 6px; bottom: 0; width: 51px; height: 3px; background: #76b0ea; }
.app.stacked::after { background: linear-gradient(90deg, #76b0ea 40px, #5c8ab8 40px); }
.app.focused { background: #5a5a5a; }
.app.focused::after { left: 0; width: 62px; }
.app.alert { background: linear-gradient(90deg, #7a7426 5px, #414141 5px) 6px 0 / 51px 100% no-repeat; }
.app.alert::after { background: #ffe600; }
.tray { margin-left: auto; display: flex; padding-right: 5px; }
.tray button { width: 29px; }
.tray .help { width: 40px; }
.tray .clock { width: 92px; flex-direction: column; line-height: 23px; }
.tray .notes { width: 57px; border-right: 1px solid #888; }
</style>
